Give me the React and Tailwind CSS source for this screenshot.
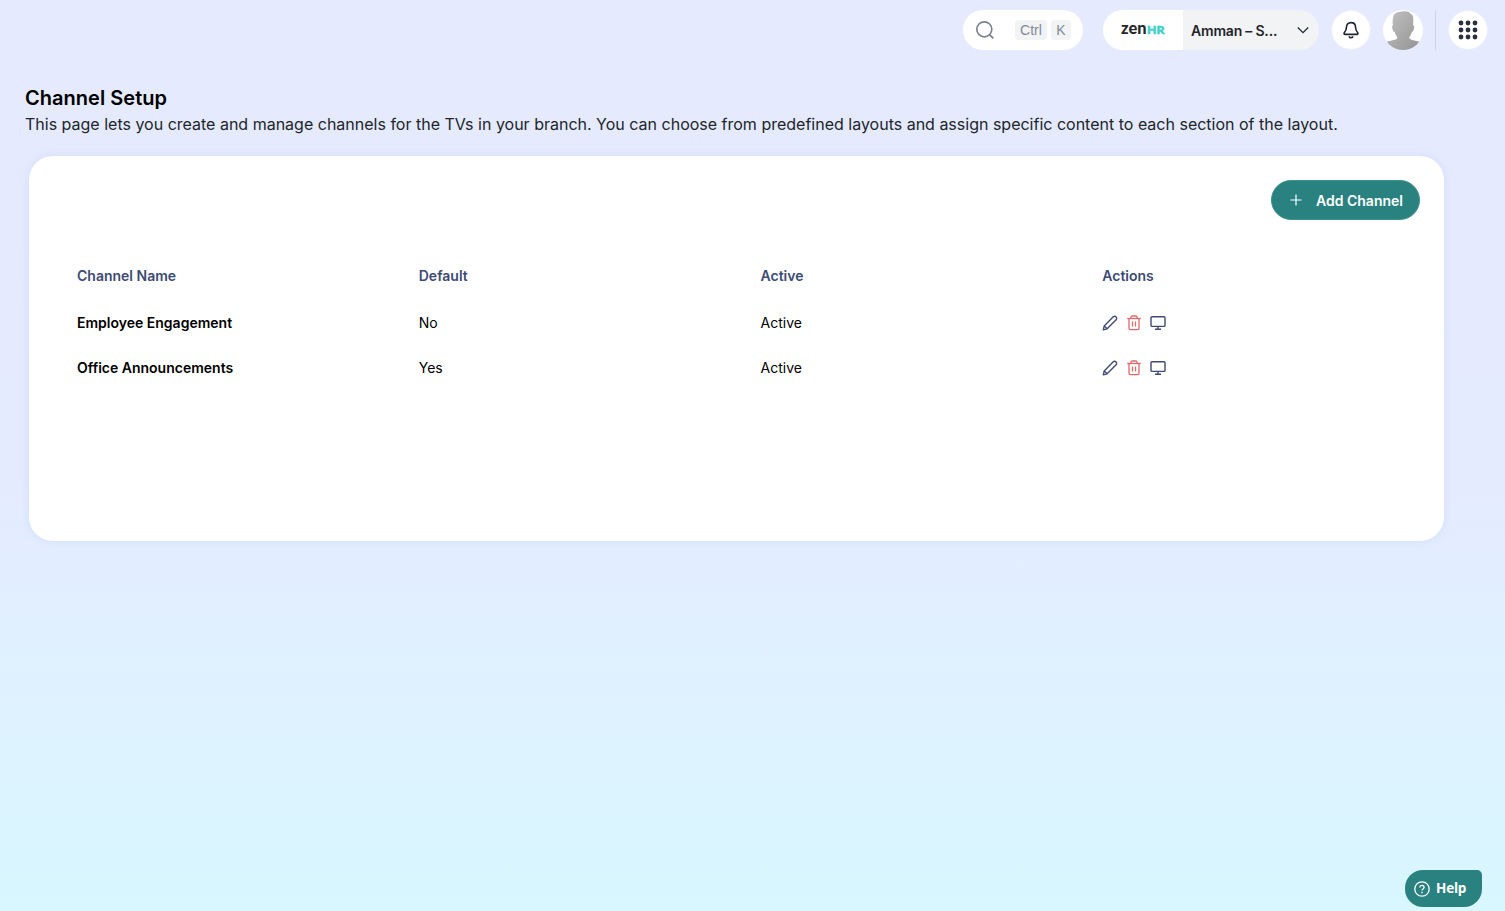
import React from "react";

const channels = [
    { id: 1, name: "Employee Engagement", isDefault: "No", status: "Active" },
    { id: 2, name: "Office Announcements", isDefault: "Yes", status: "Active" },
]

function SearchIcon(){
    return (
        <svg width="20" height="20" viewBox="0 0 20 20" fill="none" stroke="#7b8190" strokeWidth="1.7">
            <circle cx="9.3" cy="9.3" r="7.5"/>
            <path d="M14.8 14.8L18.3 18.3"/>
        </svg>
    )
}

function Logo(){
    return (
        <svg className="overflow-visible" width="46" height="20" viewBox="0 0 46 20">
            <text x="1" y="14.3" fontFamily="Lato, sans-serif" fontSize="16" fontWeight="900" fill="#272829" textLength="25.5" lengthAdjust="spacingAndGlyphs">zen</text>
            <text x="27" y="14.3" fontFamily="Lato, sans-serif" fontSize="11.2" fontWeight="900" fill="#3fd0c9" stroke="#3fd0c9" strokeWidth="0.5" textLength="17.5" lengthAdjust="spacingAndGlyphs">HR</text>
        </svg>
    )
}

function BellIcon(){
    return (
        <svg width="18" height="20" viewBox="0 0 18 20" fill="none" stroke="#1f2733" strokeWidth="1.6" strokeLinecap="round" strokeLinejoin="round">
            <path d="M9 2.6C6.2 2.6 4.5 4.5 4.5 7C4.5 10.2 3.7 11.1 2.4 12.6C1.7 13.5 2.1 14.4 3.1 14.4H14.9C15.9 14.4 16.3 13.5 15.6 12.6C14.3 11.1 13.5 10.2 13.5 7C13.5 4.5 11.8 2.6 9 2.6Z"/>
            <path d="M7.3 16.9C8 17.8 10 17.8 10.7 16.9"/>
        </svg>
    )
}

function Avatar(){
    return (
        <svg className="h-10 w-10 rounded-full bg-white" viewBox="0 0 40 40">
            <defs>
                <linearGradient id="person" x1="0" y1="0" x2="1" y2="1">
                    <stop offset="0" stopColor="#c2c2c2"/>
                    <stop offset="1" stopColor="#929292"/>
                </linearGradient>
            </defs>
            <path fill="url(#person)" d="M10.3 6.5C11.2 3.2 14.5 1.8 19 1.6C23 .8 26.5 1.9 27.2 3.4C29.8 4 30.7 7 30.2 11.5V15.5C31.8 15 31.3 18.8 30.4 20.6C29.8 22 28.9 21.6 28.5 22.7C28 25 27 26 26.3 27V28.5C28 30.2 32.5 30.6 36.8 32L33 41H7L3.2 32C7.5 30.6 12.4 30.2 14.3 28.5V27C13.2 25.6 12.1 24.2 11.8 22C10.6 22.2 10.1 21.1 9.6 19.5C9 17.6 8.7 15.2 10 15.5C9.4 12.5 9.5 9.4 10.3 6.5Z"/>
        </svg>
    )
}

function GridIcon(){
    return (
        <svg width="20" height="20" viewBox="0 0 20 20" fill="#2a3040">
            {[3, 10, 17].map(y => [3, 10, 17].map(x => <circle key={`${x}-${y}`} cx={x} cy={y} r="2.4"/>))}
        </svg>
    )
}

function EditIcon(){
    return (
        <svg width="16" height="16" viewBox="0 0 16 16" fill="none" stroke="#3d4b75" strokeWidth="1.35" strokeLinejoin="round">
            <path d="M1.3 14.8L2.2 10.9L11 2.1C11.9 1.2 13.2 1 14.1 1.9C15 2.8 14.8 4.1 13.9 5L5.1 13.8L1.3 14.8Z"/>
            <path d="M2.2 10.9L5.1 13.8"/>
        </svg>
    )
}

function TrashIcon(){
    return (
        <svg width="16" height="16" viewBox="0 0 16 16" fill="none" stroke="#e0696b" strokeWidth="1.3" strokeLinejoin="round">
            <path d="M1.2 3.5H14.8"/>
            <path d="M5 3.5V2.2C5 1.5 5.5 1 6.2 1H9.8C10.5 1 11 1.5 11 2.2V3.5"/>
            <path d="M3 3.5V13.3C3 14.1 3.6 14.7 4.4 14.7H11.6C12.4 14.7 13 14.1 13 13.3V3.5"/>
            <path d="M6.5 6.5V11.6M9.5 6.5V11.6"/>
        </svg>
    )
}

function ScreenIcon(){
    return (
        <svg width="16" height="16" viewBox="0 0 16 16" fill="none" stroke="#3d4b75" strokeWidth="1.4" strokeLinejoin="round">
            <rect x="1" y="1.8" width="14" height="9.6" rx="1"/>
            <path d="M8 11.4V14M5 14.2H11"/>
        </svg>
    )
}

function TopBar(){
    return (
        <header className="flex h-[60px] items-center justify-end pr-[17px]">
            <div className="mr-5 flex h-10 w-[120px] items-center rounded-full bg-white pl-3 font-['Liberation_Sans',sans-serif] text-sm text-[#848a99]">
                <SearchIcon/>
                <kbd className="ml-5 flex h-5 w-8 items-center justify-center rounded bg-[#f1f3f5] font-['Liberation_Sans',sans-serif]">Ctrl</kbd>
                <kbd className="ml-1 flex h-5 w-5 items-center justify-center rounded bg-[#f1f3f5] font-['Liberation_Sans',sans-serif]">K</kbd>
            </div>
            <button className="mr-3 flex h-10 w-[216px] items-center overflow-hidden rounded-full bg-[#f2f3f5]">
                <span className="flex h-full w-20 items-center bg-white pl-[17px]"><Logo/></span>
                <span className="ml-2 w-[92px] pt-0.5 text-left text-sm font-semibold tracking-[-0.2px] whitespace-nowrap text-[#212529]">Amman – S...</span>
                <svg className="ml-[13px]" width="14" height="10" viewBox="0 0 14 10" fill="none" stroke="#1f2733" strokeWidth="1.3">
                    <path d="M1.8 2.5L7 7.6L12.2 2.5"/>
                </svg>
            </button>
            <button className="mr-3 flex h-10 w-10 items-center justify-center rounded-full border border-[#eceffa] bg-white"><BellIcon/></button>
            <Avatar/>
            <div className="mx-3 h-10 w-px bg-[#cdd2e5]"></div>
            <button className="flex h-10 w-10 items-center justify-center rounded-full border border-[#eceffa] bg-white pb-px"><GridIcon/></button>
        </header>
    )
}

function App(){
    return (
        <div className="flex h-screen flex-col bg-linear-to-b/srgb from-[#e5eaff] via-[#e5ebff] via-52% to-[#d8f7ff] font-[Inter,sans-serif] text-black">
            <TopBar/>
            <main className="flex-1 pl-[25px] pr-[61px] pt-[23px]">
                <h1 className="text-xl leading-[30px] font-semibold tracking-[0.03px]">Channel Setup</h1>
                <p className="text-base leading-[22px] whitespace-nowrap text-[#212529]">This page lets you create and manage channels for the TVs in your branch. You can choose from predefined layouts and assign specific content to each section of the layout.</p>
                <section className="mt-[21px] ml-1 h-[385px] rounded-3xl bg-white p-6 shadow-[0_0_10px_rgba(90,120,200,0.12)]">
                    <div className="flex justify-end">
                        <button className="flex h-10 w-[149px] items-center rounded-full border border-[#3f918f] bg-[#2a8280] pl-[18px] text-sm font-semibold text-white">
                            <svg width="12" height="12" viewBox="0 0 12 12" stroke="white" strokeWidth="1.2"><path d="M6 .5V11.5M.5 6H11.5"/></svg>
                            <span className="ml-3.5 pt-0.5 whitespace-nowrap">Add Channel</span>
                        </button>
                    </div>
                    <div className="mt-[31px] text-sm">
                        <div className="grid h-[49px] grid-cols-4 items-center pt-px font-semibold text-[#3d4b75]">
                            <span className="pl-6">Channel Name</span>
                            <span className="pl-6">Default</span>
                            <span className="pl-6">Active</span>
                            <span className="pl-6">Actions</span>
                        </div>
                        {
                            channels.map(channel => (
                                <div key={channel.id} className="grid h-[45px] grid-cols-4 items-center">
                                    <span className="pl-6 font-semibold">{channel.name}</span>
                                    <span className="pl-6">{channel.isDefault}</span>
                                    <span className="pl-6">{channel.status}</span>
                                    <span className="flex gap-2 pl-6">
                                        <button><EditIcon/></button>
                                        <button><TrashIcon/></button>
                                        <button><ScreenIcon/></button>
                                    </span>
                                </div>
                            ))
                        }
                    </div>
                </section>
            </main>
            <footer className="flex justify-end pr-[23px] pb-1">
                <button className="flex h-[37px] w-[77px] items-center rounded-[18px] rounded-tr-[5px] bg-[#2a8280] pl-[9px] font-['Open_Sans',sans-serif] text-[13.5px] font-bold tracking-[-0.2px] text-white">
                    <svg width="16" height="16" viewBox="0 0 16 16" fill="none" stroke="white" strokeWidth="1.3">
                        <circle cx="8" cy="8" r="7.2"/>
                        <path d="M5.9 6.4C5.9 3.6 10.1 3.8 10.1 6.3C10.1 7.9 8 7.9 8 9.4M8 10.8V12.2"/>
                    </svg>
                    <span className="ml-1.5">Help</span>
                </button>
            </footer>
        </div>
    )
}

export default App
